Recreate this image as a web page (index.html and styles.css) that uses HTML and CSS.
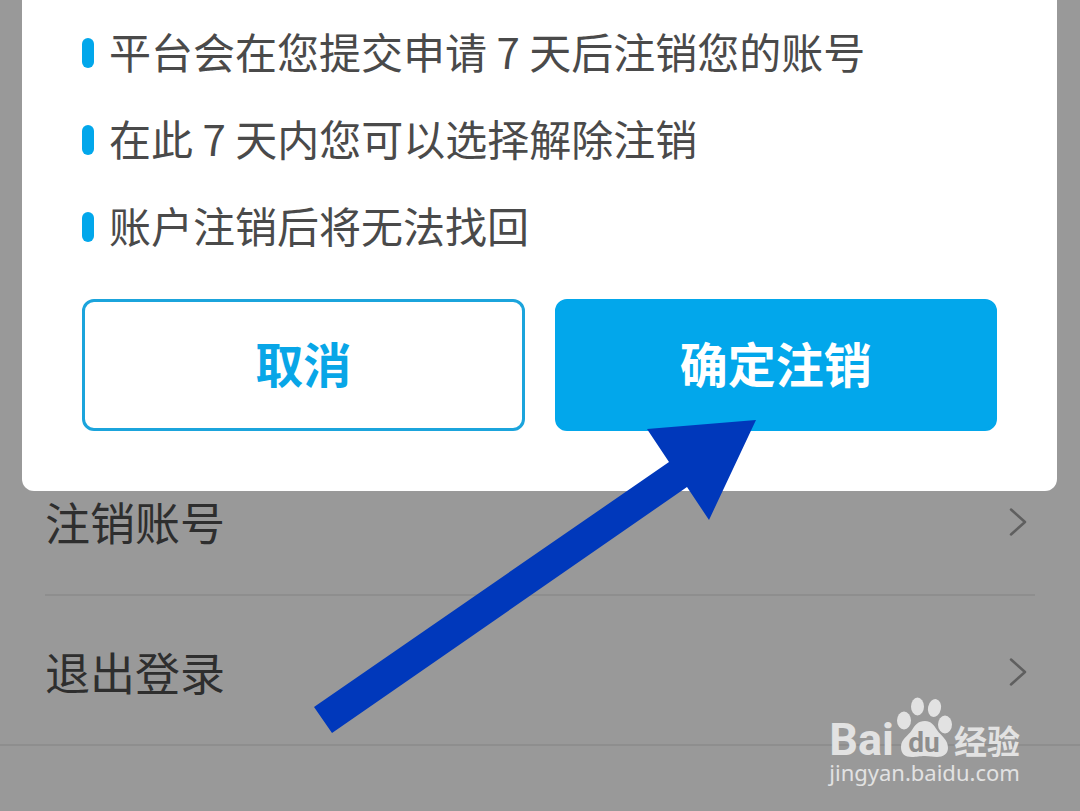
FILE: index.html
```html
<!DOCTYPE html>
<html lang="zh-CN">
<head>
<meta charset="utf-8">
<meta name="viewport" content="width=device-width, initial-scale=1">
<title>注销账号</title>
<link rel="stylesheet" href="styles.css">
</head>
<body>
<div class="screen">
  <main class="settings">
    <div class="settings-group">
      <button class="settings-row" type="button">
        <span>注销账号</span>
        <svg class="chevron" viewBox="0 0 18 28" aria-hidden="true"><path d="M2 1.500L16 14L2 26.500"/></svg>
      </button>
      <button class="settings-row" type="button">
        <span>退出登录</span>
        <svg class="chevron" viewBox="0 0 18 28" aria-hidden="true"><path d="M2 1.500L16 14L2 26.500"/></svg>
      </button>
    </div>
  </main>

  <section class="dialog" role="dialog" aria-label="注销账号">
    <ul class="notes">
      <li class="note"><span class="note-text">平台会在您提交申请 7 天后注销您的账号</span></li>
      <li class="note"><span class="note-text">在此 7 天内您可以选择解除注销</span></li>
      <li class="note"><span class="note-text">账户注销后将无法找回</span></li>
    </ul>
    <div class="actions">
      <button class="button" type="button">取消</button>
      <button class="button button-primary" type="button">确定注销</button>
    </div>
  </section>

  <svg class="arrow" viewBox="0 0 442 314" aria-hidden="true"><path d="M442 0L333 9L355 42L0 287L18 313L373 67L395 100Z"/></svg>

  <div class="watermark">
    <div class="brand">
      <span class="brand-name">Bai</span>
      <span class="paw">
        <svg class="paw-shape" viewBox="-1 -1 56 62" aria-hidden="true">
          <ellipse cx="7" cy="23.500" rx="7" ry="9"/>
          <ellipse cx="20.500" cy="9.500" rx="6.500" ry="9"/>
          <ellipse cx="37.500" cy="11" rx="6.500" ry="9" transform="rotate(12 37.500 11)"/>
          <ellipse cx="48" cy="27.500" rx="7" ry="9"/>
          <path d="M28 24C34 24 37 28 40 33C44 39 51 42 51 51C51 57 46 60 40 60C35 60 33 59 28 59C22 59 20 60 15 60C8 60 4 57 4 50C4 42 11 39 15 33C18 28 21 24 28 24Z"/>
        </svg>
        <span class="paw-text">du</span>
      </span>
      <span class="brand-suffix">经验</span>
    </div>
    <div class="site">jingyan.baidu.com</div>
  </div>
</div>
</body>
</html>
```
FILE: styles.css
```css
* {
  box-sizing: border-box;
}

body {
  margin: 0;
  background: #999;
  font-family: "Noto Sans CJK SC", sans-serif;
}

button {
  font-family: inherit;
  cursor: pointer;
}

.screen {
  position: relative;
  min-height: 100vh;
  overflow: hidden;
}

.settings {
  display: flex;
  flex-direction: column;
  justify-content: flex-end;
  min-height: 100vh;
  padding-bottom: 65px;
}

.settings-group {
  padding: 0 45px;
  border-bottom: 2px solid #8e8e8e;
}

.settings-row {
  display: flex;
  align-items: center;
  justify-content: space-between;
  width: 100%;
  height: 150px;
  padding: 3px 8px 0 0;
  border: 0;
  border-bottom: 2px solid #8e8e8e;
  background: none;
  color: #2e2e2e;
  font-size: 45px;
  line-height: 60px;
}

.settings-row:last-child {
  height: 148px;
  border-bottom: 0;
}

.chevron {
  width: 18px;
  height: 28px;
  fill: none;
  stroke: #5f5f5f;
  stroke-width: 2.5;
  stroke-linecap: round;
  stroke-linejoin: round;
}

.dialog {
  position: absolute;
  top: 0;
  left: 22px;
  right: 23px;
  padding: 23px 60px 60px;
  border-radius: 0 0 12px 12px;
  background: #fff;
}

.notes {
  display: flex;
  flex-direction: column;
  gap: 27px;
  margin: 0 0 42px;
  padding: 0;
  list-style: none;
}

.note {
  display: flex;
  align-items: center;
  gap: 15px;
  color: #4a4a4a;
  font-size: 42px;
  line-height: 56px;
}

.note::before {
  content: "";
  width: 12px;
  height: 30px;
  border-radius: 6px;
  background: #02a7eb;
}

.note-text {
  padding-bottom: 4px;
}

.actions {
  display: grid;
  grid-template-columns: 1fr 1fr;
  gap: 30px;
}

.button {
  height: 132px;
  padding: 0 0 6px;
  border: 3px solid #1ba4dc;
  border-radius: 12px;
  background: #fff;
  color: #08a6e7;
  font-size: 48px;
  font-weight: 700;
  line-height: 72px;
}

.button-primary {
  border-color: #02a7eb;
  background: #02a7eb;
  color: #fff;
}

.arrow {
  position: absolute;
  top: 420px;
  left: 314px;
  width: 442px;
  height: 314px;
  fill: #0038bb;
  pointer-events: none;
}

.watermark {
  position: absolute;
  right: 60px;
  bottom: 27px;
  color: #e2e2e2;
  pointer-events: none;
}

.brand {
  display: flex;
  align-items: flex-end;
  gap: 2px;
}

.brand-name {
  font-family: Roboto, sans-serif;
  font-size: 45px;
  font-weight: 700;
  line-height: 40px;
}

.paw {
  position: relative;
  width: 56px;
  height: 62px;
  margin-bottom: 2px;
}

.paw-shape {
  display: block;
  width: 56px;
  height: 62px;
  fill: currentColor;
}

.paw-text {
  position: absolute;
  right: 0;
  bottom: 0;
  left: 0;
  color: #8e8e8e;
  font-family: Roboto, sans-serif;
  font-size: 28px;
  font-weight: 700;
  line-height: 30px;
  text-align: center;
}

.brand-suffix {
  font-size: 33px;
  font-weight: 700;
  line-height: 40px;
}

.site {
  font-family: "Noto Sans", sans-serif;
  font-size: 22px;
  line-height: 24px;
}
```
